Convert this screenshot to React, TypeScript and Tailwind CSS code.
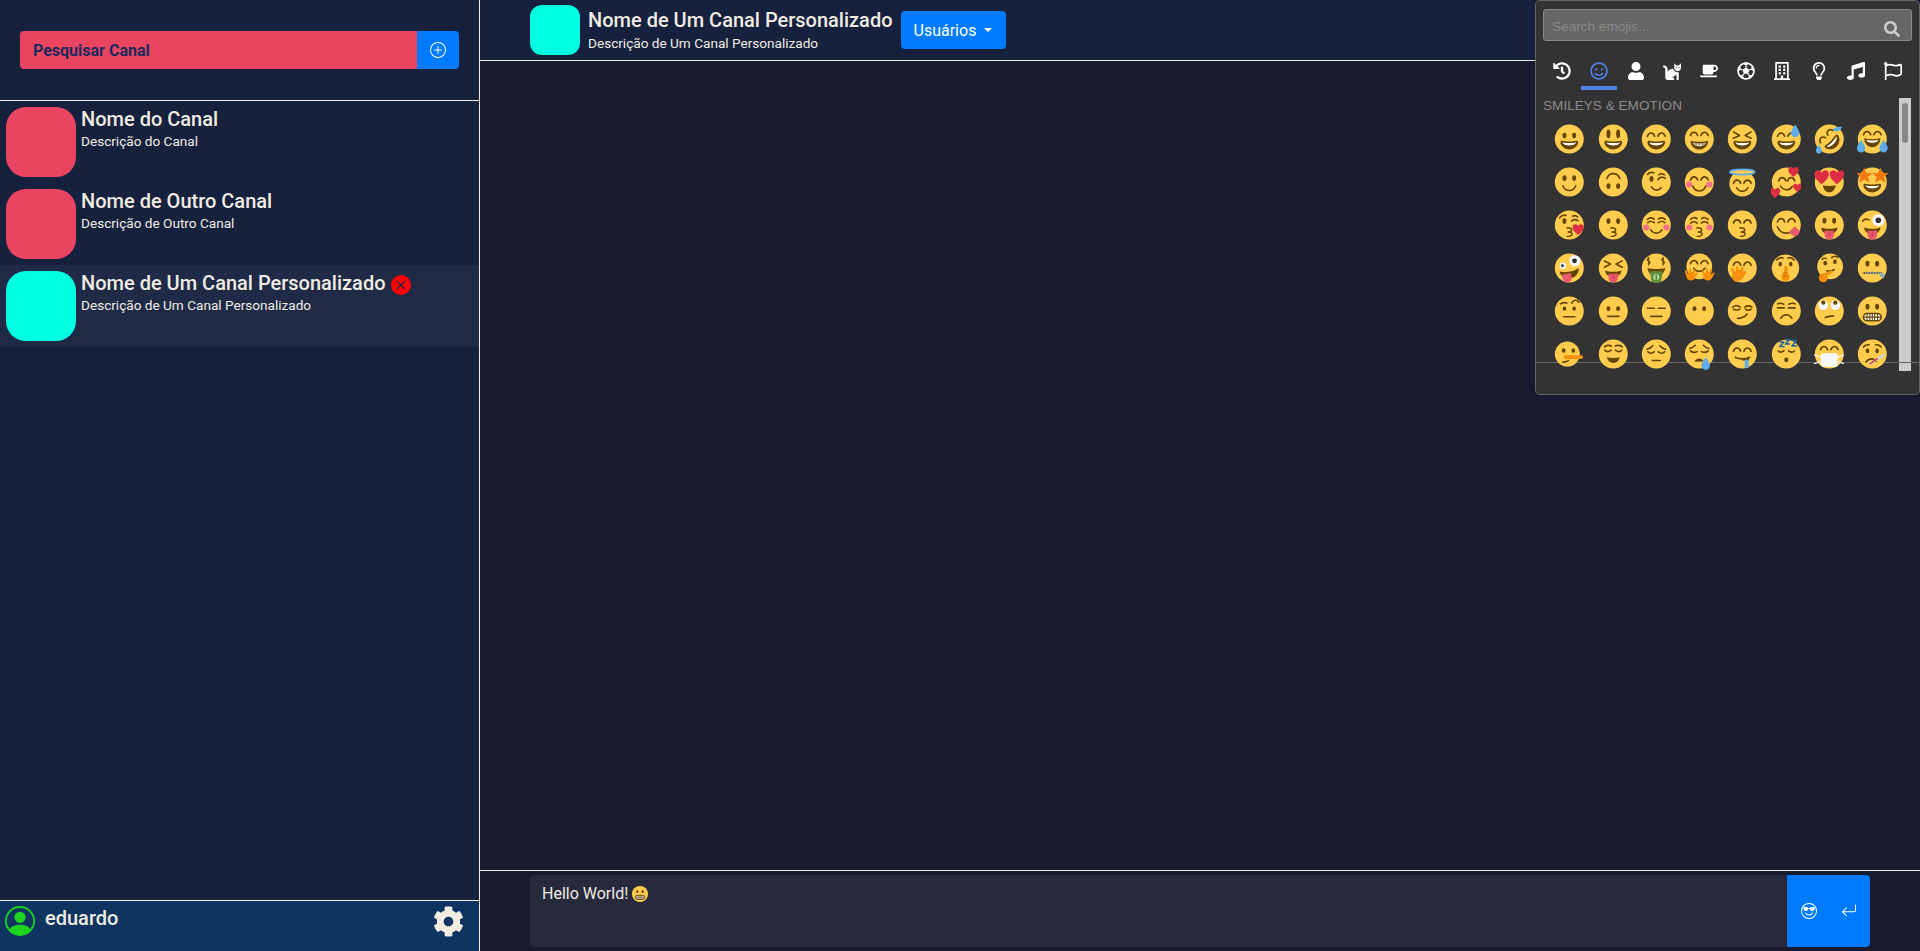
import type { ReactNode } from "react";
import {
  FaCat,
  FaCoffee,
  FaCog,
  FaHistory,
  FaMusic,
  FaRegBuilding,
  FaRegFlag,
  FaRegFutbol,
  FaRegLightbulb,
  FaRegSmile,
  FaSearch,
  FaUser,
} from "react-icons/fa";
import {
  BsArrowReturnLeft,
  BsEmojiSunglasses,
  BsPersonCircle,
  BsPlusCircle,
  BsXCircleFill,
} from "react-icons/bs";

const BROWN = "#664500";
const YELLOW = "#FFCC4D";
const RED = "#DD2E44";
const BLUE = "#5DADEC";
const PINK = "#E8596E";
const ORANGE = "#F4900C";

const channels = [
  { name: "Nome do Canal", description: "Descrição do Canal", color: "bg-[#e94560]" },
  { name: "Nome de Outro Canal", description: "Descrição de Outro Canal", color: "bg-[#e94560]" },
  { name: "Nome de Um Canal Personalizado", description: "Descrição de Um Canal Personalizado", color: "bg-[#00ffe1]", custom: true },
];

const S = ({ d, w = 2, c = BROWN }: { d: string; w?: number; c?: string }) => (
  <path d={d} fill="none" stroke={c} strokeWidth={w} strokeLinecap="round" strokeLinejoin="round" />
);
const Face = () => <circle cx="18" cy="18" r="18" fill={YELLOW} />;
const Eyes = ({ y = 13.5, ry = 3.5 }: { y?: number; ry?: number }) => (
  <>
    <ellipse cx="12" cy={y} rx="2.5" ry={ry} fill={BROWN} />
    <ellipse cx="24" cy={y} rx="2.5" ry={ry} fill={BROWN} />
  </>
);
const HappyEye = ({ x, y = 14 }: { x: number; y?: number }) => <S d={`M${x - 4.5} ${y + 1.5}c1-3 2.8-4 4.5-4s3.5 1 4.5 4`} />;
const HappyEyes = ({ y = 14 }: { y?: number }) => (
  <>
    <HappyEye x={11.5} y={y} />
    <HappyEye x={24.5} y={y} />
  </>
);
const DownEyes = ({ y = 14 }: { y?: number }) => (
  <>
    <S d={`M7.5 ${y}c1.5 2.5 6 2.5 8 0`} />
    <S d={`M20.5 ${y}c2 2.5 6.5 2.5 8 0`} />
  </>
);
const Laugh = () => (
  <>
    <path d="M18 21c-3.600 0-6-.4-9-1-.7-.1-2 0-2 2 0 4 4.600 9 11 9s11-5 11-9c0-2-1.300-2.100-2-2-3 .6-5.400 1-9 1z" fill={BROWN} />
    <path d="M9 22s3 1 9 1 9-1 9-1-2 4-9 4-9-4-9-4z" fill="#fff" />
  </>
);
const Smile = () => <S d="M10 22.500c1.500 4 4.500 6 8 6s6.500-2 8-6" />;
const Kiss = () => <S d="M15 21.500c3.500-.5 6 .8 6 2.500s-2.500 2.500-4.500 2.500c2.500 0 5 1 5 2.700s-3 3-6 2.800" w={1.800} />;
const Tongue = () => (
  <>
    <path d="M12 25h12v5a6 6 0 0 1-12 0z" fill={PINK} />
    <path d="M18 26v6" stroke="#C2304A" strokeWidth="1" />
  </>
);
const TongueMouth = () => (
  <>
    <path d="M8 21c2.500 1 6 1.500 10 1.500s7.500-.5 10-1.500c.5 4-3.500 8-10 8s-10.500-4-10-8z" fill={BROWN} />
    <Tongue />
  </>
);
const Heart = ({ x, y, s = 1 }: { x: number; y: number; s?: number }) => (
  <path transform={`translate(${x} ${y}) scale(${s})`} d="M-5-1c0-2.800 3.500-3.800 5-1 1.500-2.800 5-1.800 5 1 0 3-3 5-5 7-2-2-5-4-5-7z" fill={RED} />
);
const Drop = ({ x, y, s = 1 }: { x: number; y: number; s?: number }) => (
  <path transform={`translate(${x} ${y}) scale(${s})`} d="M0 0c-2 3-4 5.500-4 8a4 4 0 0 0 8 0c0-2.500-2-5-4-8z" fill={BLUE} />
);
const Star = ({ x, y }: { x: number; y: number }) => (
  <path transform={`translate(${x} ${y}) scale(1.250)`} d="M0-8l2.300 5.600 6-.3-4.600 3.900 1.500 5.800L0 3.800l-5.200 3.200 1.500-5.800-4.600-3.900 6 .3z" fill="#F4780C" />
);
const Cheeks = () => (
  <>
    <circle cx="5.500" cy="21" r="3.800" fill="#F4718A" />
    <circle cx="30.500" cy="21" r="3.800" fill="#F4718A" />
  </>
);
const Hand = ({ x, y, s = 1 }: { x: number; y: number; s?: number }) => (
  <g transform={`translate(${x} ${y}) scale(${s})`} fill={ORANGE}>
    <circle r="5" />
    <rect x="-5" y="-8" width="2.200" height="8" rx="1.100" transform="rotate(-15)" />
    <rect x="-2" y="-9" width="2.200" height="9" rx="1.100" />
    <rect x="1" y="-9" width="2.200" height="9" rx="1.100" transform="rotate(12)" />
    <rect x="3" y="-7" width="2.200" height="8" rx="1.100" transform="rotate(30)" />
  </g>
);

const Grimace = () => (
  <>
    <Face />
    <Eyes y={12.500} />
    <rect x="7" y="21" width="22" height="9" rx="4.500" fill="#fff" stroke={BROWN} strokeWidth="2" />
    <path d="M7 25.500h22M11.500 21v9M15 21v9M18 21v9M21 21v9M24.500 21v9" stroke={BROWN} strokeWidth="1.300" />
  </>
);

const emojis: ReactNode[] = [
  <><Face /><Eyes /><Laugh /></>,
  <><Face /><Eyes y={11.500} ry={5.500} /><Laugh /></>,
  <><Face /><HappyEyes y={13} /><Laugh /></>,
  <>
    <Face /><HappyEyes y={12} />
    <path d="M7 20c3 .8 7 1.200 11 1.200s8-.4 11-1.200c0 6-5 11-11 11S7 26 7 20z" fill={BROWN} />
    <path d="M9.500 22.500c5 .8 12 .8 17 0-1.500 2.500-4 4.500-8.500 4.500s-7-2-8.500-4.500z" fill="#fff" />
    <path d="M9.500 24h17M14 22.500v4M18 22.500v4.500M22 22.500v4" stroke={BROWN} strokeWidth=".8" />
  </>,
  <>
    <Face />
    <S d="M7 9l7.500 4.500L7 17" /><S d="M29 9l-7.500 4.500L29 17" />
    <Laugh />
  </>,
  <><Face /><HappyEyes y={13} /><Laugh /><Drop x={29} y={0} s={1.300} /></>,
  <>
    <g transform="rotate(-45 18 18)">
      <Face /><HappyEyes y={12} />
      <Laugh />
    </g>
    <Drop x={5} y={25} s={.9} />
    <path d="M22 6c3-3 8-4 12-3-1 4-6 6-10 5z" fill={BLUE} />
  </>,
  <>
    <Face /><HappyEyes y={11} />
    <path d="M8 17c3 .8 6.500 1.200 10 1.200s7-.4 10-1.200c0 6-4 11-10 11S8 23 8 17z" fill={BROWN} />
    <path d="M10 19c4 .8 12 .8 16 0-1 2-3.500 3.500-8 3.500s-7-1.500-8-3.500z" fill="#fff" />
    <Drop x={4} y={19} s={1.300} /><Drop x={32} y={19} s={1.300} />
  </>,
  <><Face /><Eyes y={13} /><Smile /></>,
  <g transform="rotate(180 18 18)"><Face /><Eyes y={13} /><Smile /></g>,
  <>
    <Face /><ellipse cx="12" cy="14" rx="2.500" ry="3.500" fill={BROWN} />
    <S d="M7 8.500c2-2.500 5-3 8-2" /><S d="M20 15c1-3 6-4 9-1.500" /><S d="M21 9c2-1.500 5-1.500 7 0" />
    <S d="M12 24c2 3 4 4 6.500 4s4-1 5.500-3" />
  </>,
  <><Face /><Cheeks /><HappyEyes y={14} /><S d="M10 23c1.500 4 4.500 6 8 6s6.500-2 8-6" /></>,
  <>
    <circle cx="18" cy="20" r="16" fill={YELLOW} />
    <ellipse cx="18" cy="5.500" rx="15.500" ry="3.200" fill={YELLOW} stroke={BLUE} strokeWidth="2.200" />
    <HappyEyes y={18} />
    <S d="M11 25c1.500 3 4 4.500 7 4.500s5.500-1.500 7-4.500" />
  </>,
  <>
    <Face /><HappyEye x={13} y={15} /><HappyEye x={24} y={15} />
    <S d="M11 23c2 3 4.500 4.500 7.500 4.500s5.500-1.500 7-4" />
    <Heart x={27} y={4} s={1.300} /><Heart x={4} y={30} s={1.300} /><Heart x={32} y={24} s={1.100} />
  </>,
  <>
    <Face />
    <path d="M10 22c2 .4 5 .7 8 .7s6-.3 8-.7c-.5 5-4 9-8 9s-7.500-4-8-9z" fill={BROWN} />
    <Heart x={8.500} y={10} s={1.800} /><Heart x={27.500} y={10} s={1.800} />
  </>,
  <>
    <Face /><Laugh />
    <Star x={8} y={10} /><Star x={28} y={10} />
  </>,
  <>
    <Face /><ellipse cx="12" cy="13" rx="2.500" ry="3.500" fill={BROWN} />
    <S d="M6 9c2-3 5-4 8-3" /><S d="M21 13c1.500-2 5-2.500 7.500-.5" /><S d="M22 7c2-1 5-.5 6.500 1" />
    <Kiss /><Heart x={29} y={22} s={1.400} />
  </>,
  <><Face /><Eyes y={13} /><Kiss /></>,
  <>
    <Face /><Cheeks />
    <S d="M7 11c2-2.500 6-2.500 8.500-.5" /><S d="M29 11c-2-2.500-6-2.500-8.500-.5" />
    <S d="M7.500 15c2-2 5.500-2 8 0" /><S d="M20.500 15c2.500-2 6-2 8 0" />
    <S d="M11 24c2 3 4.500 4 7 4s5-1 7-4" />
  </>,
  <>
    <Face /><Cheeks />
    <S d="M7 11c2-2.500 6-3 8-1" /><S d="M29 11c-2-2.500-6-3-8-1" />
    <S d="M7.500 15.500c2-2 5.500-2 8 0" /><S d="M20.500 15.500c2.500-2 6-2 8 0" />
    <Kiss />
  </>,
  <><Face /><HappyEyes y={14} /><Kiss /></>,
  <>
    <Face /><HappyEyes y={12.500} />
    <S d="M7 20c2 5 6 8 11 8 4.500 0 8.500-2.500 10.500-7" />
    <path d="M22 26l6-6 7 5c-.5 3-3 6.500-5.500 6.500-3.500 0-7-2-7.500-5.500z" fill={PINK} />
  </>,
  <><Face /><Eyes y={12.500} /><TongueMouth /></>,
  <>
    <Face />
    <S d="M6 13c2-2.500 5-3 8-1.500" />
    <circle cx="25.500" cy="12" r="7.500" fill="#F5F8FA" />
    <circle cx="25.500" cy="12" r="3.500" fill="#292F33" />
    <TongueMouth />
  </>,
  <>
    <Face />
    <circle cx="10" cy="15" r="4" fill="#F5F8FA" /><circle cx="9.500" cy="15" r="1.800" fill="#292F33" />
    <circle cx="25" cy="9" r="7" fill="#F5F8FA" /><circle cx="24.500" cy="9" r="3" fill="#292F33" />
    <path d="M6 22c4 2 16 1.500 24-4 0 7-5 13-12 13S6 27 6 22z" fill={BROWN} />
    <path d="M9 26l11-2 1 6c.3 3-2 5.500-5 6-3 .4-5.500-1.500-6-4.500z" fill={PINK} />
  </>,
  <>
    <Face />
    <S d="M7 9l7.500 4L7 17" /><S d="M29 9l-7.500 4L29 17" />
    <TongueMouth />
  </>,
  <>
    <Face />
    <S d="M9 6c-1.500 0-2.500 1-2 2.200s2.500 1.300 3 2.300-.5 2.300-2 2.300M8.500 4.500v10" w={1.400} />
    <S d="M27 6c-1.500 0-2.500 1-2 2.200s2.500 1.300 3 2.300-.5 2.300-2 2.300M26.500 4.500v10" w={1.400} />
    <path d="M7 18c3 .8 7 1.200 11 1.200s8-.4 11-1.200c0 3-2 6-4 8H11c-2-2-4-5-4-8z" fill={BROWN} />
    <path d="M10 22h16l-2 13c-4 1-8 1-12 0z" fill="#5C913B" />
    <circle cx="18" cy="29" r="3.600" fill="#C6E5B3" />
    <S d="M19.300 27.500c-1-.8-2.600-.5-2.600.6s2.600 1 2.600 2.200-1.600 1.300-2.600.6M18 26v6" w={.9} c="#3E721D" />
  </>,
  <>
    <circle cx="18" cy="16" r="16" fill={YELLOW} />
    <HappyEyes y={11} />
    <S d="M11 18c1.500 2.500 4 4 7 4s5.500-1.500 7-4" />
    <Hand x={7.500} y={28} s={1.100} /><Hand x={28.500} y={28} s={1.100} />
  </>,
  <>
    <Face /><HappyEyes y={13} />
    <Hand x={13} y={27} s={1.300} />
    <path d="M5 28c3-3 9-9 14-8 2 4 0 12-7 15-4 .5-6-3-7-7z" fill={ORANGE} />
  </>,
  <>
    <circle cx="17" cy="18" r="17" fill={YELLOW} />
    <ellipse cx="10.500" cy="13" rx="2.200" ry="3" fill={BROWN} /><ellipse cx="23.500" cy="13" rx="2.200" ry="3" fill={BROWN} />
    <S d="M6 8c2-2.500 5-3.500 8-2.500" /><S d="M28 8c-2-2.500-5-3.500-8-2.500" />
    <rect x="15.500" y="15" width="4" height="12" rx="2" fill={ORANGE} />
    <circle cx="17" cy="29" r="5" fill={ORANGE} />
    <S d="M14 24h5M14 28h5" w={1} c="#C66A00" />
  </>,
  <>
    <circle cx="19" cy="16" r="16" fill={YELLOW} />
    <ellipse cx="13" cy="12" rx="2.300" ry="2.800" fill={BROWN} /><ellipse cx="25" cy="10" rx="2.300" ry="2.800" fill={BROWN} />
    <S d="M9 7c1-1 3-1.500 5-1" /><S d="M21 5c2-2 5-2 7.500-.5" />
    <S d="M15 21.500c3 .5 6 0 9-1.500" />
    <circle cx="10.500" cy="30" r="5.500" fill={ORANGE} />
    <rect x="10" y="20" width="11" height="3.600" rx="1.800" fill={ORANGE} transform="rotate(-25 10 20) translate(-1 5)" />
  </>,
  <>
    <Face /><Eyes y={12.500} />
    <path d="M8 24h21" stroke={BROWN} strokeWidth="2.500" strokeLinecap="round" />
    <path d="M9 24h20" stroke="#99AAB5" strokeWidth="3" strokeDasharray="1.300 .7" />
    <path d="M28 23l6 3-2 5-5-3z" fill="#99AAB5" />
  </>,
  <>
    <Face /><ellipse cx="12" cy="15" rx="2.300" ry="2.600" fill={BROWN} /><ellipse cx="24" cy="15" rx="2.300" ry="2.600" fill={BROWN} />
    <S d="M7 9c2-1.500 5-2 8-1" /><S d="M21 8c2-4 6-5 9-1" />
    <S d="M11 25h14" />
  </>,
  <><Face /><ellipse cx="12" cy="15" rx="2.500" ry="3" fill={BROWN} /><ellipse cx="24" cy="15" rx="2.500" ry="3" fill={BROWN} /><S d="M11 24.500h14" /></>,
  <><Face /><S d="M7 14.500h8.500" /><S d="M20.500 14.500h8.500" /><S d="M11 24.500h14" /></>,
  <><Face /><ellipse cx="12" cy="15" rx="2.500" ry="3" fill={BROWN} /><ellipse cx="24" cy="15" rx="2.500" ry="3" fill={BROWN} /></>,
  <>
    <Face />
    <S d="M6 13c3-2 7-2 9.500 0" /><S d="M7 15.500c2 1.500 6 1.500 8 0" />
    <S d="M21 13c3-2 6-2 9 0" /><S d="M22 15.500c2 1.500 5 1.500 7 0" />
    <S d="M12 27c4 0 9-1.500 12-5.500" />
  </>,
  <>
    <Face />
    <S d="M7 9c2-1 5-1 8 .5" /><S d="M29 9c-2-1-5-1-8 .5" />
    <S d="M7 14h8.500" /><S d="M20.500 14h8.500" />
    <S d="M11 27c2-3 4.500-4.500 7-4.500s5 1.500 7 4.500" />
  </>,
  <>
    <Face />
    <circle cx="10.500" cy="10.500" r="6" fill="#F5F8FA" /><circle cx="10.500" cy="7.500" r="2.600" fill={BROWN} />
    <circle cx="25.500" cy="10.500" r="6" fill="#F5F8FA" /><circle cx="25.500" cy="7.500" r="2.600" fill={BROWN} />
    <S d="M13 26c3-1.500 6-2 10-2" />
  </>,
  <Grimace />,
  <>
    <circle cx="15.500" cy="18" r="15.500" fill={YELLOW} />
    <ellipse cx="11" cy="13.500" rx="2.300" ry="2.800" fill={BROWN} /><ellipse cx="23" cy="13.500" rx="2.300" ry="2.800" fill={BROWN} />
    <S d="M10 28c2.500 0 5-.5 7-2" />
    <rect x="11" y="19.500" width="24" height="4.500" rx="2.200" fill={ORANGE} />
  </>,
  <>
    <Face />
    <S d="M7 9c2-2 6-2.500 8.500-1" /><S d="M29 9c-2-2-6-2.500-8.500-1" />
    <DownEyes y={13} />
    <path d="M10 22c5 1 11 1 16 0-1 4.500-4 7-8 7s-7-2.500-8-7z" fill={BROWN} />
  </>,
  <>
    <Face />
    <S d="M6.500 12c2-.5 5-2 7-4.500" /><S d="M29.500 12c-2-.5-5-2-7-4.500" />
    <DownEyes y={15} />
    <S d="M13 26h10" />
  </>,
  <>
    <Face />
    <S d="M6 11c2-.5 5-2 7-4" /><S d="M30 11c-2-.5-5-2-7-4" />
    <S d="M7 14c2 2 6 2.500 8.500 1" /><S d="M29 14c-2 2-6 2.500-8.500 1" />
    <path d="M12 28c1-3 3.500-4.500 6-4.500s5 1.500 6 4.500c-3-1-9-1-12 0z" fill={BROWN} />
    <Drop x={26} y={22} s={1.300} />
  </>,
  <>
    <Face /><HappyEyes y={13} />
    <S d="M9 22c3 1.500 6 2 9 2s6-.5 9-2" />
    <path d="M18 24c3 0 6 0 9-1l-1 3h-8z" fill={BROWN} />
    <path d="M21 25h5v10h-5z" fill={BLUE} />
  </>,
  <>
    <Face />
    <S d="M8 14c1.500 2 5 2 7 0" /><S d="M21 14c2 2 5.500 2 7 0" />
    <ellipse cx="18" cy="25" rx="2.600" ry="3.200" fill={BROWN} />
    <S d="M10 3h5l-5 5.500h5M17 0h5l-5 5.500h5M25 1h6l-6 7h6" w={2} c="#226699" />
  </>,
  <>
    <Face /><HappyEyes y={11} />
    <path d="M-1 19l9 3M-1 30l9-3M37 19l-9 3M37 30l-9-3" stroke="#F5F8FA" strokeWidth="1.500" />
    <rect x="7.500" y="17" width="21" height="17" rx="3" fill="#F5F8FA" />
  </>,
  <>
    <Face />
    <ellipse cx="12" cy="14" rx="2.300" ry="3" fill={BROWN} /><ellipse cx="24" cy="14" rx="2.300" ry="3" fill={BROWN} />
    <S d="M7 9c2-2 5-3 7-2.500" /><S d="M29 9c-2-2-5-3-7-2.500" />
    <S d="M10 28c2-3 4-4 7-4s5 1 6 3" />
    <path d="M15 30l17-11" stroke="#CCD6DD" strokeWidth="3" strokeLinecap="round" />
    <path d="M15 30l9-6" stroke={RED} strokeWidth="1.800" strokeLinecap="round" />
  </>,
];

const Emoji = ({ children, className }: { children: ReactNode; className: string }) => (
  <svg viewBox="-1 -2 38 40" className={className}>
    {children}
  </svg>
);

const tabs = [
  { icon: <FaHistory /> },
  { icon: <FaRegSmile />, active: true },
  { icon: <FaUser /> },
  { icon: <FaCat /> },
  { icon: <FaCoffee /> },
  { icon: <FaRegFutbol /> },
  { icon: <FaRegBuilding /> },
  { icon: <FaRegLightbulb /> },
  { icon: <FaMusic /> },
  { icon: <FaRegFlag /> },
];

function EmojiPicker() {
  return (
    <div className="absolute top-0 right-0 flex h-[395px] w-[385px] flex-col rounded-[5px] border border-[#666] bg-[#333] font-['Liberation_Sans',sans-serif]">
      <div className="relative mx-[7px] mt-[8px] h-[32px] rounded-[3px] border border-[#888] bg-[#666]">
        <input
          placeholder="Search emojis..."
          className="h-full w-full bg-transparent px-2 pt-[2px] text-[13.6px] text-white outline-none placeholder:text-[#888]"
        />
        <FaSearch className="absolute top-[11px] right-[11px] text-[16px] text-[#ccc]" />
      </div>
      <div className="mt-[17px] ml-[8px] flex h-[32px]">
        {tabs.map((tab, i) => (
          <div
            key={i}
            className={`flex h-full w-[36.7px] items-start justify-center pt-[4px] [&>svg]:h-[18px] [&>svg]:w-auto ${
              tab.active ? "border-b-4 border-[#4f81e5] text-[#4f81e5]" : "text-white"
            }`}
          >
            {tab.icon}
          </div>
        ))}
      </div>
      <div className="relative flex-1 overflow-hidden">
        <div className="ml-[7px] pt-[8px] text-[13.6px] leading-[16px] text-[#888]">SMILEYS &amp; EMOTION</div>
        <div className="relative z-10 ml-[12px] grid w-[346px] grid-cols-8 pt-[3px]">
          {emojis.map((emoji, i) => (
            <div key={i} className="flex h-[43.2px] items-center justify-center">
              <Emoji className="h-[32.2px] w-[30.6px]">{emoji}</Emoji>
            </div>
          ))}
        </div>
        <div className="absolute top-[8px] right-[8px] h-[273px] w-[12px] bg-[#ccc] pt-[5px]">
          <div className="mx-auto h-[40px] w-[6px] rounded-[3px] bg-[#888]"></div>
        </div>
        <div className="absolute top-[272px] right-0 left-0 h-px bg-[#666]"></div>
      </div>
    </div>
  );
}

function Sidebar() {
  return (
    <aside className="flex h-full w-[480px] shrink-0 flex-col border-r border-[#f0ece2] bg-[#16213e]">
      <div className="flex h-[101px] shrink-0 items-center border-b border-[#f0ece2] px-[20px]">
        <div className="flex h-[38px] w-[439px]">
          <input
            placeholder="Pesquisar Canal"
            className="h-full flex-1 rounded-l-[4px] bg-[#e94560] px-[13px] text-[16px] font-bold text-[#1b2a5c] outline-none placeholder:text-[#1b2a5c]"
          />
          <button className="flex w-[42px] items-center justify-center rounded-r-[4px] bg-[#007bff] text-white">
            <BsPlusCircle className="text-[16px]" />
          </button>
        </div>
      </div>
      <div className="flex-1">
        {channels.map((c) => (
          <div key={c.name} className={`flex h-[82px] p-[6px] ${c.custom ? "bg-[#1f2a47]" : ""}`}>
            <div className={`h-[70px] w-[70px] shrink-0 rounded-[20px] ${c.color}`}></div>
            <div className="ml-[5px] text-[#f0ece2]">
              <div className="flex items-center text-[20px] leading-[24px] font-medium">
                {c.name}
                {c.custom && <BsXCircleFill className="mt-[3px] ml-[5px] text-[20px] text-[#ff0000]" />}
              </div>
              <div className="text-[13.6px] leading-[20px]">{c.description}</div>
            </div>
          </div>
        ))}
      </div>
      <div className="flex h-[51px] shrink-0 items-start justify-between border-t border-[#f0ece2] bg-[#0f3460] pt-[5px] pr-[15px] pl-[5px]">
        <div className="flex items-start">
          <BsPersonCircle className="text-[30px] text-[#1ed31e]" />
          <span className="ml-[10px] text-[20px] leading-[24px] font-medium text-[#f0ece2]">eduardo</span>
        </div>
        <FaCog className="text-[31px] text-[#f0ece2]" />
      </div>
    </aside>
  );
}

export default function App() {
  return (
    <div className="relative flex h-screen overflow-hidden bg-[#1a1a2e] font-['Roboto',sans-serif]">
      <Sidebar />
      <main className="flex h-full flex-1 flex-col">
        <header className="flex h-[61px] shrink-0 items-center border-b border-[#f0ece2] bg-[#16213e] pl-[50px]">
          <div className="h-[50px] w-[50px] rounded-[12px] bg-[#00ffe1]"></div>
          <div className="ml-[8px] text-[#f0ece2]">
            <div className="text-[20px] leading-[24px] font-medium">Nome de Um Canal Personalizado</div>
            <div className="mt-[2px] text-[13.6px] leading-[18px]">Descrição de Um Canal Personalizado</div>
          </div>
          <button className="ml-[8px] flex h-[38px] w-[105px] items-center rounded-[4px] bg-[#007bff] pt-[1px] pl-[13px] text-[16px] text-white">
            Usuários
            <span className="mt-[-2px] ml-[8px] h-0 w-0 border-x-[4.8px] border-t-[4.8px] border-x-transparent border-t-white"></span>
          </button>
        </header>
        <div className="flex-1"></div>
        <footer className="flex h-[81px] shrink-0 border-t border-[#f0ece2] px-[50px] pt-[4px]">
          <div className="flex h-[72px] flex-1 items-start rounded-l-[4px] bg-[#27293d] px-[12px] py-[7px] text-[16px] leading-[24px] text-[#f0ece2]">
            Hello World!
            <Emoji className="mt-[3px] ml-[3px] h-[18px] w-[18px]">
              <Grimace />
            </Emoji>
          </div>
          <div className="flex h-[72px] w-[83px] items-center justify-center gap-[24px] rounded-r-[4px] bg-[#007bff] text-white">
            <BsEmojiSunglasses className="text-[16px]" />
            <BsArrowReturnLeft className="text-[16px]" />
          </div>
        </footer>
      </main>
      <EmojiPicker />
    </div>
  );
}
